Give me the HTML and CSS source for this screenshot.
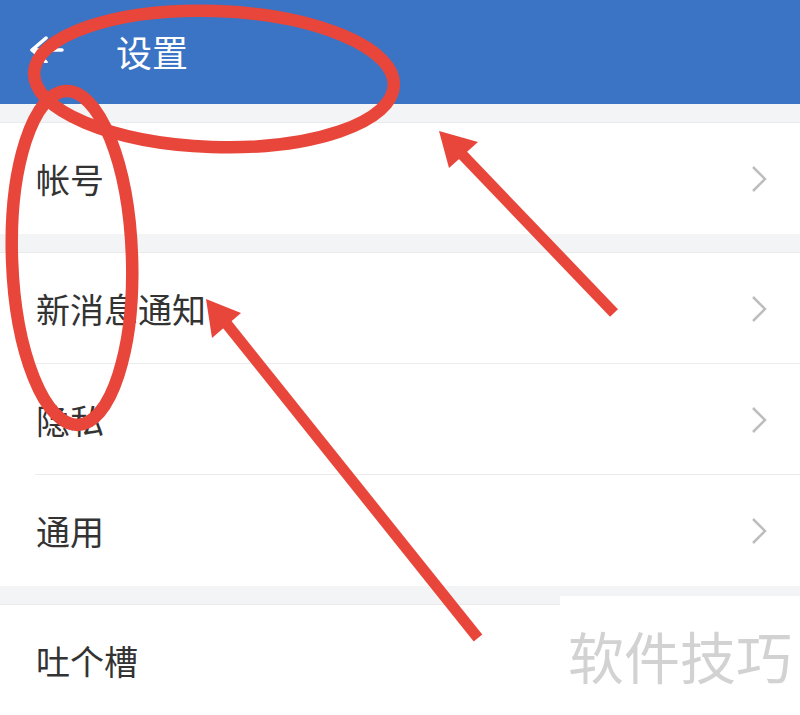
FILE: index.html
```html
<!DOCTYPE html>
<html lang="zh">
<head>
<meta charset="utf-8">
<link rel="stylesheet" href="styles.css">
</head>
<body>
<div class="page">
  <header class="topbar">
    <svg class="back" width="36" height="30" viewBox="0 0 36 30">
      <path d="M4 17 H34 M4 17 L18 5 M4 17 L18 29" fill="none" stroke="#fff" stroke-width="3.5" stroke-linecap="round" stroke-linejoin="round"/>
    </svg>
    <h1 class="title">设置</h1>
  </header>
  <div class="gap"></div>
  <div class="group">
    <div class="row"><span class="label">帐号</span><svg class="chev" width="18" height="28" viewBox="0 0 18 28"><path d="M3 2 L15 14 L3 26" fill="none" stroke="#bdbdbd" stroke-width="2.5"/></svg></div>
  </div>
  <div class="gap"></div>
  <div class="group">
    <div class="row sep"><span class="label">新消息通知</span><svg class="chev" width="18" height="28" viewBox="0 0 18 28"><path d="M3 2 L15 14 L3 26" fill="none" stroke="#bdbdbd" stroke-width="2.5"/></svg></div>
    <div class="row sep"><span class="label">隐私</span><svg class="chev" width="18" height="28" viewBox="0 0 18 28"><path d="M3 2 L15 14 L3 26" fill="none" stroke="#bdbdbd" stroke-width="2.5"/></svg></div>
    <div class="row"><span class="label">通用</span><svg class="chev" width="18" height="28" viewBox="0 0 18 28"><path d="M3 2 L15 14 L3 26" fill="none" stroke="#bdbdbd" stroke-width="2.5"/></svg></div>
  </div>
  <div class="gap"></div>
  <div class="group">
    <div class="row"><span class="label">吐个槽</span></div>
  </div>

  <div class="watermark">软件技巧</div>

  <svg class="marks" width="800" height="715" viewBox="0 0 800 715">
    <g fill="none" stroke="#e8463b" stroke-width="12.5">
      <ellipse cx="214" cy="79" rx="180" ry="68" transform="rotate(2 214 79)"/>
      <ellipse cx="72" cy="258" rx="60" ry="167" transform="rotate(-2 72 258)"/>
    </g>
    <g stroke="#e8463b" stroke-width="11" stroke-linecap="butt">
      <line x1="614" y1="313" x2="455" y2="147"/>
      <line x1="478" y1="638" x2="222" y2="318"/>
    </g>
    <g fill="#e8463b">
      <polygon points="439,131 478,142 449,168"/>
      <polygon points="206,299 241,313 212,338"/>
    </g>
  </svg>
</div>
</body>
</html>
```

FILE: styles.css
```css
* { box-sizing: border-box; margin: 0; padding: 0; }
html, body { background: #f3f4f6; }
body {
  font-family: "Noto Sans CJK SC", "Noto Sans", sans-serif;
  width: 800px;
  height: 715px;
  overflow: hidden;
}
.page {
  position: relative;
  width: 800px;
  height: 715px;
  overflow: hidden;
}
.topbar {
  height: 104px;
  background: #3b74c4;
  display: flex;
  align-items: center;
  padding-left: 28px;
}
.back { margin-top: -8px; }
.title {
  font-size: 36px;
  font-weight: 400;
  color: #fff;
  margin-left: 52px;
  line-height: 1;
  margin-top: -3px;
}
.gap {
  height: 19px;
  background: #f3f4f6;
  border-bottom: 1px solid #e9eaec;
}
.group { background: #fff; }
.row {
  height: 111px;
  display: flex;
  align-items: center;
  justify-content: space-between;
  padding: 0 32px 0 36px;
  position: relative;
}
.row.sep::after {
  content: "";
  position: absolute;
  left: 35px;
  right: 0;
  bottom: 0;
  height: 1px;
  background: #ececec;
}
.label {
  font-size: 34px;
  color: #333;
  line-height: 1;
}
.watermark {
  position: absolute;
  left: 560px;
  top: 596px;
  width: 240px;
  height: 119px;
  background: #fff;
  color: #d2d2d2;
  font-size: 56px;
  line-height: 1;
  padding: 31px 0 0 8px;
}
.marks {
  position: absolute;
  left: 0;
  top: 0;
}
```
